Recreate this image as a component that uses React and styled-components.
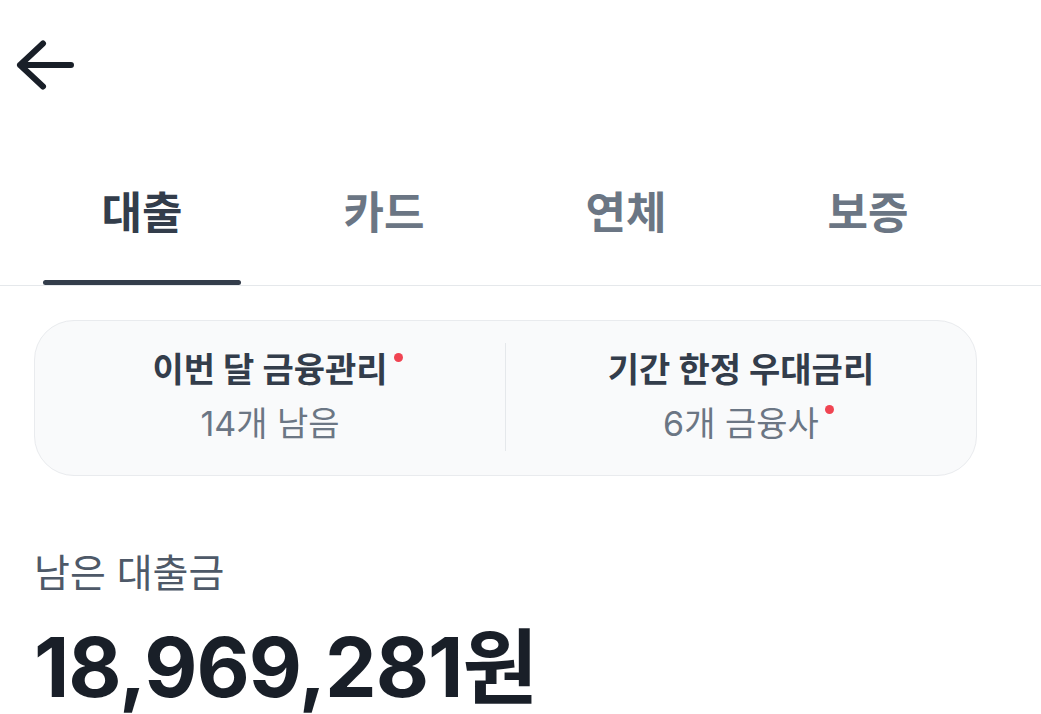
import React from 'react';
import styled, { createGlobalStyle } from 'styled-components';

const GlobalStyle = createGlobalStyle`
  body {
    margin: 0;
    background: #fff;
    font-family: Inter, "Noto Sans CJK KR", sans-serif;
  }
`;

const tabs = ['대출', '카드', '연체', '보증'];

const App = () => {
  return (
    <Page>
      <GlobalStyle />
      <Header>
        <BackButton aria-label="뒤로">
          <svg width="60" height="54" viewBox="0 0 60 54" fill="none">
            <path
              d="M4 25 H55 M27 3.5 L4 25 L27 46.5"
              stroke="#191f28"
              strokeWidth="6"
              strokeLinecap="round"
              strokeLinejoin="round"
            />
          </svg>
        </BackButton>
      </Header>

      <TabBar>
        {tabs.map((t, i) => (
          <Tab key={t} $active={i === 0}>{t}</Tab>
        ))}
      </TabBar>

      <SummaryCard>
        <SummaryItem>
          <ItemTitle><Dotted>이번 달 금융관리</Dotted></ItemTitle>
          <ItemSub>14개 남음</ItemSub>
        </SummaryItem>
        <Divider />
        <SummaryItem>
          <ItemTitle>기간 한정 우대금리</ItemTitle>
          <ItemSub><Dotted $top={-2}>6개 금융사</Dotted></ItemSub>
        </SummaryItem>
      </SummaryCard>

      <Balance>
        <BalanceLabel>남은 대출금</BalanceLabel>
        <BalanceAmount>18,969,281원</BalanceAmount>
      </Balance>
    </Page>
  );
};

export default App;

const Page = styled.div`
  width: 1041px;
  min-height: 714px;
`;

const Header = styled.header`
  height: 175px;
  padding: 40px 0 0 16px;
  box-sizing: border-box;
`;

const BackButton = styled.button`
  display: block;
  border: none;
  background: none;
  padding: 0;
  cursor: pointer;
`;

const TabBar = styled.nav`
  display: flex;
  padding: 0 21px;
  border-bottom: 1px solid #e5e8eb;
`;

const Tab = styled.div`
  position: relative;
  width: 242px;
  height: 110px;
  padding-top: 8px;
  box-sizing: border-box;
  text-align: center;
  font-size: 44px;
  line-height: 60px;
  font-weight: 700;
  color: ${p => (p.$active ? '#333d4b' : '#6b7684')};

  &::after {
    content: '';
    display: ${p => (p.$active ? 'block' : 'none')};
    position: absolute;
    left: 22px;
    right: 22px;
    bottom: 0;
    height: 5px;
    border-radius: 3px;
    background: #333d4b;
  }
`;

const SummaryCard = styled.section`
  display: flex;
  margin: 34px 64px 0 34px;
  padding: 22px 0 24px;
  background: #f9fafb;
  border: 1px solid #e9ebee;
  border-radius: 40px;
`;

const SummaryItem = styled.div`
  flex: 1;
  display: flex;
  flex-direction: column;
  align-items: center;
`;

const Divider = styled.div`
  width: 1px;
  background: #e5e8eb;
`;

const ItemTitle = styled.div`
  font-size: 34px;
  line-height: 54px;
  font-weight: 700;
  color: #333d4b;
`;

const ItemSub = styled.div`
  font-size: 34px;
  line-height: 54px;
  font-weight: 400;
  color: #6b7684;
`;

const Dotted = styled.span`
  position: relative;

  &::after {
    content: '';
    position: absolute;
    right: -15px;
    top: ${p => (p.$top ?? 0) + 4}px;
    width: 9px;
    height: 9px;
    border-radius: 50%;
    background: #f04452;
  }
`;

const Balance = styled.div`
  padding: 72px 0 0 34px;
`;

const BalanceLabel = styled.div`
  font-size: 39px;
  line-height: 50px;
  color: #4e5968;
`;

const BalanceAmount = styled.div`
  margin-top: 32px;
  font-size: 82px;
  line-height: 76px;
  font-weight: 700;
  color: #191f28;
  letter-spacing: -1px;
`;
